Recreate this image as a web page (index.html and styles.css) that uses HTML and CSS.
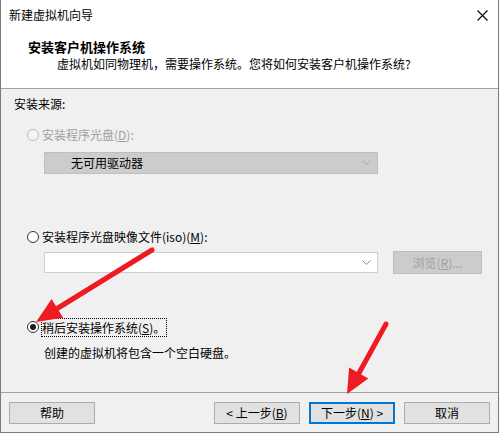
FILE: index.html
```html
<!DOCTYPE html>
<html lang="zh-CN">
<head>
    <meta charset="UTF-8">
    <title>新建虚拟机向导</title>
    <link rel="stylesheet" href="styles.css">
</head>
<body>
    <div class="window">
        <div class="top">
            <div class="titlebar">
                <span>新建虚拟机向导</span>
                <svg class="close" width="11" height="11" viewBox="0 0 11 11">
                    <path d="M0.5 0.5 L10.5 10.5 M10.5 0.5 L0.5 10.5" stroke="#000" stroke-width="1.1" fill="none"/>
                </svg>
            </div>
            <div class="head-title">安装客户机操作系统</div>
            <div class="head-sub">虚拟机如同物理机，需要操作系统。您将如何安装客户机操作系统?</div>
        </div>

        <div class="content">
            <div class="section-label">安装来源:</div>

            <div class="option disabled first">
                <span class="radio"></span>
                <span>安装程序光盘(<u>D</u>):</span>
            </div>
            <div class="select disabled-select">
                <span>无可用驱动器</span>
                <svg width="9" height="6" viewBox="0 0 9 6"><path d="M0.5 0.5 L4.5 4.5 L8.5 0.5" stroke="#a8a8a8" fill="none"/></svg>
            </div>

            <div class="option second">
                <span class="radio"></span>
                <span>安装程序光盘映像文件(iso)(<u>M</u>):</span>
            </div>
            <div class="combo-row">
                <div class="select combo">
                    <span></span>
                    <svg width="9" height="6" viewBox="0 0 9 6"><path d="M0.5 0.5 L4.5 4.5 L8.5 0.5" stroke="#8a8a8a" fill="none"/></svg>
                </div>
                <button class="btn browse" disabled>浏览(<u>R</u>)...</button>
            </div>

            <div class="option third">
                <span class="radio checked"></span>
                <span class="focus">稍后安装操作系统(<u>S</u>)。</span>
            </div>
            <div class="note">创建的虚拟机将包含一个空白硬盘。</div>
        </div>

        <div class="footer">
            <button class="btn">帮助</button>
            <div class="spacer"></div>
            <button class="btn">&lt; 上一步(<u>B</u>)</button>
            <button class="btn default">下一步(<u>N</u>) &gt;</button>
            <button class="btn">取消</button>
        </div>

        <!-- red annotation arrows -->
        <svg class="arrows" width="499" height="433" viewBox="0 0 499 433">
            <line x1="152" y1="250" x2="58" y2="308" stroke="#ed1c24" stroke-width="5" stroke-linecap="round"/>
            <polygon points="36,322 51.6,299 63.2,317.8" fill="#ed1c24"/>
            <line x1="386" y1="324" x2="359" y2="373" stroke="#ed1c24" stroke-width="5" stroke-linecap="round"/>
            <polygon points="347,394 349.1,367.6 368.3,378.4" fill="#ed1c24"/>
        </svg>
    </div>
</body>
</html>
```

FILE: styles.css
```css
body {
    margin: 0;
    padding: 0;
    font-family: "Noto Sans CJK SC", "Liberation Sans", sans-serif;
    font-size: 12px;
    line-height: 16px;
    color: #000;
    background-color: #f0f0f0;
}

.window {
    position: relative;
    width: 499px;
    height: 433px;
    box-sizing: border-box;
    border: 1px solid #7a7a7a;
    border-top: none;
    background-color: #f0f0f0;
    display: flex;
    flex-direction: column;
}

.top {
    background-color: #fff;
    height: 88px;
    border-bottom: 1px solid #a0a0a0;
    flex-shrink: 0;
}

.titlebar {
    height: 30px;
    display: flex;
    align-items: center;
    justify-content: space-between;
    padding: 0 10px 0 8px;
}

.close {
    margin-top: 1px;
}

.head-title {
    margin: 9px 0 0 27px;
    font-weight: bold;
    font-size: 13px;
}

.head-sub {
    margin: 1px 0 0 56px;
}

.content {
    flex: 1;
    padding: 7px 0 0 13px;
}

.option {
    display: flex;
    align-items: center;
    gap: 3px;
    margin-left: 13px;
    height: 16px;
}

.option.first {
    margin-top: 15px;
}

.option.second {
    margin-top: 55px;
}

.option.third {
    margin-top: 45px;
}

.disabled {
    color: #a0a0a0;
}

.radio {
    width: 10px;
    height: 10px;
    border-radius: 50%;
    border: 1px solid #333;
    background-color: #fff;
    display: flex;
    align-items: center;
    justify-content: center;
    flex-shrink: 0;
}

.disabled .radio {
    border-color: #bcbcbc;
    background-color: #f4f4f4;
}

.radio.checked::after {
    content: "";
    width: 6px;
    height: 6px;
    border-radius: 50%;
    background-color: #1a1a1a;
}

.focus {
    outline: 1px dotted #000;
    outline-offset: 0;
    padding: 1px 1px 0 0;
}

.select {
    box-sizing: border-box;
    display: flex;
    align-items: center;
    justify-content: space-between;
    margin-left: 30px;
    width: 334px;
    padding: 0 6px 0 26px;
}

.disabled-select {
    margin-top: 9px;
    height: 22px;
    background-color: #cccccc;
    border: 1px solid #bfbfbf;
}

.combo-row {
    display: flex;
    align-items: center;
    gap: 15px;
    margin-top: 6px;
}

.combo {
    height: 21px;
    background-color: #fff;
    border: 1px solid #cfcfcf;
}

.btn {
    font-family: inherit;
    font-size: 12px;
    line-height: 16px;
    width: 86px;
    height: 22px;
    padding: 0;
    background-color: #e1e1e1;
    border: 1px solid #adadad;
    color: #000;
}

.btn.browse {
    width: 89px;
    height: 23px;
    background-color: #cccccc;
    border-color: #bfbfbf;
    color: #a0a0a0;
}

.btn.default {
    border: 2px solid #0078d7;
}

.note {
    margin: 10px 0 0 30px;
}

.footer {
    height: 40px;
    box-sizing: border-box;
    border-top: 1px solid #a0a0a0;
    display: flex;
    align-items: flex-start;
    gap: 9px;
    padding: 9px 8px 0 8px;
    flex-shrink: 0;
}

.spacer {
    flex: 1;
}

.arrows {
    position: absolute;
    left: -1px;
    top: 0;
    pointer-events: none;
}
```
